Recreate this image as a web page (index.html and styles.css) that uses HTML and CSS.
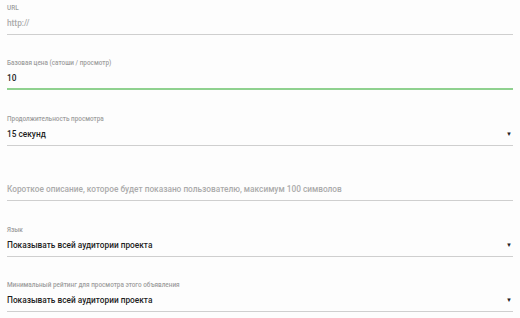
FILE: index.html
```html
<!DOCTYPE html>
<html lang="ru">
<head>
<meta charset="utf-8">
<link rel="stylesheet" href="styles.css">
</head>
<body>
<form class="form">
  <div class="field">
    <div class="label">URL</div>
    <div class="value placeholder">http://</div>
  </div>
  <div class="field focused">
    <div class="label">Базовая цена (сатоши / просмотр)</div>
    <div class="value">10</div>
  </div>
  <div class="field">
    <div class="label">Продолжительность просмотра</div>
    <div class="value select"><span>15 секунд</span><span class="arrow">▼</span></div>
  </div>
  <div class="field">
    <div class="label"></div>
    <div class="value placeholder">Короткое описание, которое будет показано пользователю, максимум 100 символов</div>
  </div>
  <div class="field">
    <div class="label">Язык</div>
    <div class="value select"><span>Показывать всей аудитории проекта</span><span class="arrow">▼</span></div>
  </div>
  <div class="field">
    <div class="label">Минимальный рейтинг для просмотра этого объявления</div>
    <div class="value select"><span>Показывать всей аудитории проекта</span><span class="arrow">▼</span></div>
  </div>
</form>
</body>
</html>
```

FILE: styles.css
```css
html, body {
  margin: 0;
  padding: 0;
  background: #fdfdfd;
}
body {
  font-family: Roboto, "Liberation Sans", sans-serif;
}
.form {
  padding: 1px 7px 0;
}
.field {
  border-bottom: 1px solid #cfcfcf;
  margin-bottom: 21.4px;
  padding-bottom: 3px;
}
.field.focused {
  border-bottom: 2px solid #8fd18f;
  padding-bottom: 2px;
}
.label {
  height: 14px;
  line-height: 14px;
  font-size: 6.4px;
  font-weight: 500;
  color: #9e9e9e;
}
.value {
  height: 16px;
  line-height: 16px;
  font-size: 8.3px;
  font-weight: 500;
  color: #1e1e1e;
  white-space: nowrap;
}
.value.placeholder {
  font-size: 8.3px;
  color: #ababab;
}
.select {
  display: flex;
  justify-content: space-between;
  align-items: center;
}
.arrow {
  font-size: 6px;
  color: #222;
  padding-right: 1px;
}
```
